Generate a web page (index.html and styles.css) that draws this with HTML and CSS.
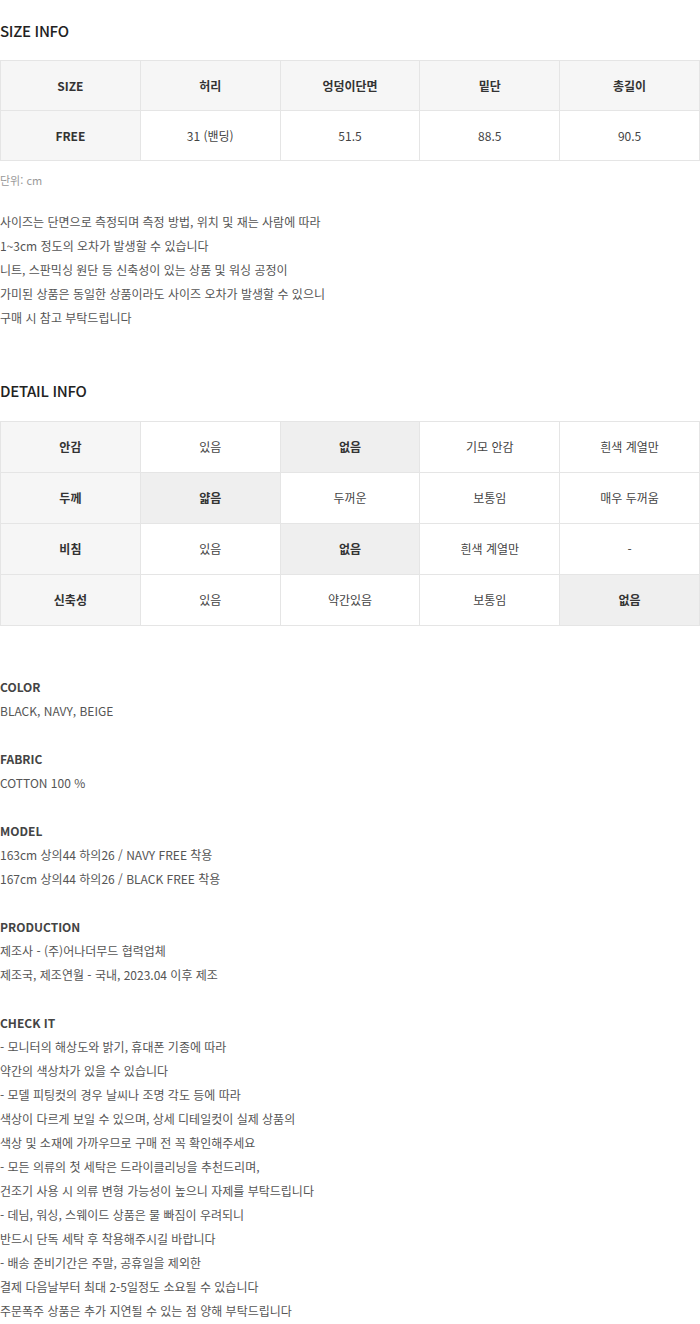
FILE: index.html
```html
<!DOCTYPE html>
<html lang="ko">
<head>
<meta charset="utf-8">
<link rel="stylesheet" href="styles.css">
</head>
<body>
<div class="page">
  <h2 class="title title-size">SIZE INFO</h2>
  <table class="tbl size-tbl">
    <tr>
      <th class="head">SIZE</th>
      <th class="head">허리</th>
      <th class="head">엉덩이단면</th>
      <th class="head">밑단</th>
      <th class="head">총길이</th>
    </tr>
    <tr>
      <th class="head">FREE</th>
      <td>31 (밴딩)</td>
      <td>51.5</td>
      <td>88.5</td>
      <td>90.5</td>
    </tr>
  </table>
  <p class="unit">단위: cm</p>
  <p class="note">사이즈는 단면으로 측정되며 측정 방법, 위치 및 재는 사람에 따라<br>1~3cm 정도의 오차가 발생할 수 있습니다<br>니트, 스판믹싱 원단 등 신축성이 있는 상품 및 워싱 공정이<br>가미된 상품은 동일한 상품이라도 사이즈 오차가 발생할 수 있으니<br>구매 시 참고 부탁드립니다</p>

  <h2 class="title title-detail">DETAIL INFO</h2>
  <table class="tbl detail-tbl">
    <tr>
      <th class="head">안감</th>
      <td>있음</td>
      <td class="on">없음</td>
      <td>기모 안감</td>
      <td>흰색 계열만</td>
    </tr>
    <tr>
      <th class="head">두께</th>
      <td class="on">얇음</td>
      <td>두꺼운</td>
      <td>보통임</td>
      <td>매우 두꺼움</td>
    </tr>
    <tr>
      <th class="head">비침</th>
      <td>있음</td>
      <td class="on">없음</td>
      <td>흰색 계열만</td>
      <td>-</td>
    </tr>
    <tr>
      <th class="head">신축성</th>
      <td>있음</td>
      <td>약간있음</td>
      <td>보통임</td>
      <td class="on">없음</td>
    </tr>
  </table>

  <div class="info">
    <section class="block">
      <h3 class="label">COLOR</h3>
      <p class="text">BLACK, NAVY, BEIGE</p>
    </section>
    <section class="block">
      <h3 class="label">FABRIC</h3>
      <p class="text">COTTON 100 %</p>
    </section>
    <section class="block">
      <h3 class="label">MODEL</h3>
      <p class="text">163cm 상의44 하의26 / NAVY FREE 착용<br>167cm 상의44 하의26 / BLACK FREE 착용</p>
    </section>
    <section class="block">
      <h3 class="label">PRODUCTION</h3>
      <p class="text">제조사 - (주)어나더무드 협력업체<br>제조국, 제조연월 - 국내, 2023.04 이후 제조</p>
    </section>
    <section class="block">
      <h3 class="label">CHECK IT</h3>
      <p class="text">- 모니터의 해상도와 밝기, 휴대폰 기종에 따라<br>약간의 색상차가 있을 수 있습니다<br>- 모델 피팅컷의 경우 날씨나 조명 각도 등에 따라<br>색상이 다르게 보일 수 있으며, 상세 디테일컷이 실제 상품의<br>색상 및 소재에 가까우므로 구매 전 꼭 확인해주세요<br>- 모든 의류의 첫 세탁은 드라이클리닝을 추천드리며,<br>건조기 사용 시 의류 변형 가능성이 높으니 자제를 부탁드립니다<br>- 데님, 워싱, 스웨이드 상품은 물 빠짐이 우려되니<br>반드시 단독 세탁 후 착용해주시길 바랍니다<br>- 배송 준비기간은 주말, 공휴일을 제외한<br>결제 다음날부터 최대 2-5일정도 소요될 수 있습니다<br>주문폭주 상품은 추가 지연될 수 있는 점 양해 부탁드립니다</p>
    </section>
  </div>
</div>
</body>
</html>
```

FILE: styles.css
```css
* { box-sizing: border-box; }
html, body { margin: 0; padding: 0; background: #fff; }
body {
  font-family: "Noto Sans CJK KR", "Noto Sans", sans-serif;
  color: #555;
  font-size: 12px;
  line-height: 24px;
}
.page { width: 700px; }
.title {
  margin: 0;
  font-size: 15px;
  line-height: 24px;
  font-weight: 500;
  color: #222;
  letter-spacing: -0.3px;
}
.title-size { padding-top: 19px; margin-bottom: 17px; }
.title-detail { margin-top: 49px; margin-bottom: 18px; }
.tbl {
  width: 700px;
  border-collapse: collapse;
  table-layout: fixed;
}
.tbl th, .tbl td {
  border: 1px solid #e5e5e5;
  text-align: center;
  vertical-align: middle;
  font-size: 12px;
  padding: 0;
  color: #444;
}
.tbl .head {
  background: #f6f6f6;
  font-weight: 700;
  color: #333;
}
.tbl td.on {
  background: #efefef;
  font-weight: 700;
  color: #333;
}
.size-tbl tr { height: 50px; }
.detail-tbl tr { height: 51px; }
.unit {
  margin: 7px 0 0;
  font-size: 11px;
  color: #999;
}
.note {
  margin: 18px 0 0;
  color: #555;
}
.info { margin-top: 49px; display: flex; flex-direction: column; gap: 24px; }
.block { margin: 0; }
.label {
  margin: 0;
  font-size: 12px;
  line-height: 24px;
  font-weight: 700;
  color: #444;
}
.text { margin: 0; color: #555; }
```
